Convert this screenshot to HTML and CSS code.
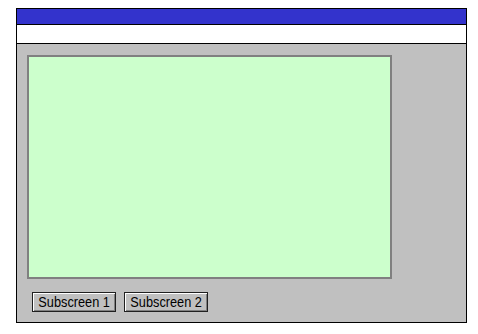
FILE: index.html
```html
<!DOCTYPE html>
<html>
<head>
<meta charset="utf-8">
<link rel="stylesheet" href="styles.css">
</head>
<body>
<div class="window">
  <div class="titlebar"></div>
  <div class="menubar"></div>
  <div class="content">
    <div class="screen"></div>
    <div class="buttons">
      <button class="btn"><span class="label">Subscreen 1</span></button>
      <button class="btn"><span class="label">Subscreen 2</span></button>
    </div>
  </div>
</div>
</body>
</html>
```
FILE: styles.css
```css
html, body {
  margin: 0;
  padding: 0;
  background: #ffffff;
}
body {
  padding: 8px 0 0 16px;
  font-family: "Liberation Sans", Arial, sans-serif;
}
.window {
  width: 449px;
  border: 1px solid #000000;
  display: flex;
  flex-direction: column;
}
.titlebar {
  height: 15px;
  background: #3333cc;
  border-bottom: 1px solid #000000;
}
.menubar {
  height: 18px;
  background: #ffffff;
  border-bottom: 1px solid #000000;
}
.content {
  height: 278px;
  background: #c0c0c0;
  box-sizing: border-box;
  padding: 11px 0 0 10px;
  display: flex;
  flex-direction: column;
}
.screen {
  width: 361px;
  height: 220px;
  background: #ccffcc;
  border: 2px solid #808080;
}
.buttons {
  display: flex;
  gap: 8px;
  margin: 13px 0 0 5px;
}
.btn {
  width: 84px;
  height: 20px;
  margin: 0;
  padding: 0;
  background: #c0c0c0;
  border: 1px solid #202020;
  box-shadow: inset 1px 1px 0 #ffffff, inset -1px -1px 0 #808080;
  font-family: "Liberation Sans", Arial, sans-serif;
  font-size: 15px;
  color: #000000;
  display: flex;
  align-items: center;
  justify-content: center;
  overflow: hidden;
}
.label {
  display: inline-block;
  transform: scaleX(0.85);
  white-space: nowrap;
  line-height: 18px;
}
```
